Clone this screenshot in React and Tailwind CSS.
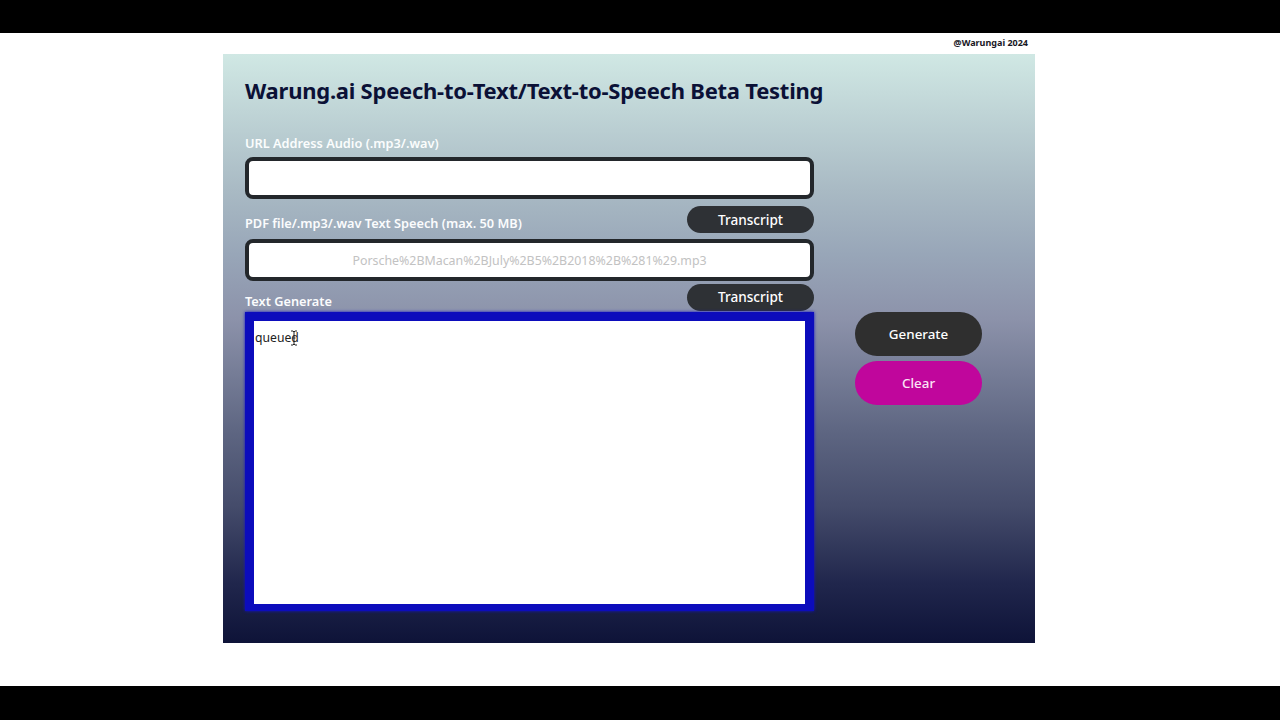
export default function App() {
  const font = { fontFamily: '"Noto Sans", "Open Sans", sans-serif' };
  return (
    <div style={font} className="w-[1280px] h-[720px] flex flex-col bg-black overflow-hidden">
      <div className="h-[33px] shrink-0 bg-black" />
      <div className="h-[653px] shrink-0 bg-white flex flex-col items-start pl-[223px]">
        <div className="w-[812px] h-[21px] shrink-0 flex items-start justify-end pr-[7px] pt-[5px]">
          <span className="text-[9px] font-bold text-[#17171f] leading-[10px]">@Warungai 2024</span>
        </div>
        <div className="w-[812px] h-[589px] shrink-0 flex pl-[22px] bg-[linear-gradient(180deg,#d0e8e4_0%,#a9bac4_23%,#98a6b8_34%,#8c92aa_45%,#5e6682_64%,#444b6a_77%,#20264c_90%,#0e1338_100%)]">
          <div className="w-[569px] shrink-0 flex flex-col">
            <h1 className="mt-[20px] h-[32px] text-[22px] leading-[32px] font-bold tracking-[-0.24px] text-[#0b1136] whitespace-nowrap">
              Warung.ai Speech-to-Text/Text-to-Speech Beta Testing
            </h1>
            <label className="mt-[28px] h-[19px] text-[12.75px] leading-[19px] font-semibold text-[#fbfdfd] whitespace-nowrap">
              URL Address Audio (.mp3/.wav)
            </label>
            <div className="mt-[4px] h-[42px] rounded-lg border-4 border-[#23272b] bg-white" />
            <div className="mt-[7px] h-[27px] flex justify-between">
              <label className="mt-[8px] h-[19px] text-[12.75px] leading-[19px] font-semibold text-[#fbfcfd] whitespace-nowrap">
                PDF file/.mp3/.wav Text Speech (max. 50 MB)
              </label>
              <button className="w-[127px] h-[27px] pt-px rounded-full bg-[#2e3135] text-white text-[13.6px] font-medium leading-none">
                Transcript
              </button>
            </div>
            <div className="mt-[6px] h-[42px] pt-[3px] rounded-lg border-4 border-[#23272b] bg-white flex items-center justify-center text-[12.4px] text-[#c2c2c2]">
              Porsche%2BMacan%2BJuly%2B5%2B2018%2B%281%29.mp3
            </div>
            <div className="mt-[3px] h-[27px] flex justify-between">
              <label className="mt-[8px] h-[19px] text-[12.75px] leading-[19px] font-semibold text-[#fbfcfd] whitespace-nowrap">
                Text Generate
              </label>
              <button className="w-[127px] h-[27px] pb-px rounded-full bg-[#2e3135] text-white text-[13.6px] font-medium leading-none">
                Transcript
              </button>
            </div>
            <div className="relative mt-px h-[299px] border-[9px] border-b-[7px] border-[#0c0cbc] shadow-[0_0_3px_#1414c8] bg-white text-[12.2px] leading-none text-[#222] pl-px pt-[11px]">
              queued
              <svg className="absolute left-[36px] top-[9px]" width="8" height="16" viewBox="0 0 8 16" fill="none" stroke="#222" strokeWidth="1">
                <path d="M1 1h2l1 1 1-1h2M4 2v12M1 15h2l1-1 1 1h2M2.5 8h3" />
              </svg>
            </div>
          </div>
          <div className="ml-[41px] mt-[258px] flex flex-col gap-[5px]">
            <button className="w-[127px] h-[44px] pt-px rounded-full bg-[#2f2f2f] text-white text-[13.4px] font-medium">
              Generate
            </button>
            <button className="w-[127px] h-[44px] pt-px rounded-full bg-[#c0069c] text-[#fbe4f5] text-[13.4px] font-medium">
              Clear
            </button>
          </div>
        </div>
      </div>
      <div className="flex-1 bg-black" />
    </div>
  );
}
